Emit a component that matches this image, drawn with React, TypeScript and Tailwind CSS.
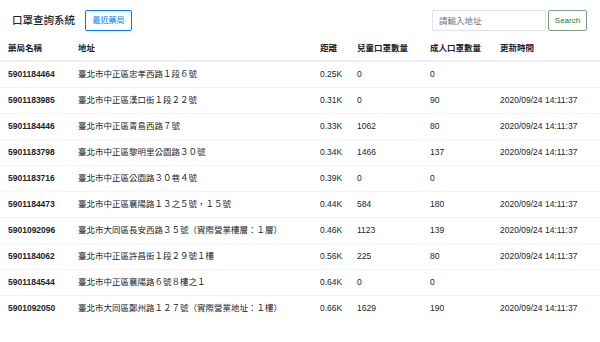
import React from 'react';

const DATE = '2020/09/24 14:11:37';

const rows = [
  { id: '5901184464', addr: '臺北市中正區忠孝西路１段６號', dist: '0.25K', child: '0', adult: '0', time: '' },
  { id: '5901183985', addr: '臺北市中正區漢口街１段２２號', dist: '0.31K', child: '0', adult: '90', time: DATE },
  { id: '5901184446', addr: '臺北市中正區青島西路７號', dist: '0.33K', child: '1062', adult: '80', time: DATE },
  { id: '5901183798', addr: '臺北市中正區黎明里公園路３０號', dist: '0.34K', child: '1466', adult: '137', time: DATE },
  { id: '5901183716', addr: '臺北市中正區公園路３０巷４號', dist: '0.39K', child: '0', adult: '0', time: '' },
  { id: '5901184473', addr: '臺北市中正區襄陽路１３之５號，１５號', dist: '0.44K', child: '584', adult: '180', time: DATE },
  { id: '5901092096', addr: '臺北市大同區長安西路３５號（實際營業樓層：１層）', dist: '0.46K', child: '1123', adult: '139', time: DATE },
  { id: '5901184062', addr: '臺北市中正區許昌街１段２９號１樓', dist: '0.56K', child: '225', adult: '80', time: DATE },
  { id: '5901184544', addr: '臺北市中正區襄陽路６號８樓之１', dist: '0.64K', child: '0', adult: '0', time: '' },
  { id: '5901092050', addr: '臺北市大同區鄭州路１２７號（實際營業地址：１樓）', dist: '0.66K', child: '1629', adult: '190', time: DATE },
];

const headers = ['藥局名稱', '地址', '距離', '兒童口罩數量', '成人口罩數量', '更新時間'];

const App = () => {
  return (
    <div className="w-[600px] h-[342px] overflow-hidden bg-white text-[#212529] font-['Liberation_Sans','Noto_Sans_CJK_TC',sans-serif]">
      <div className="flex items-center pt-[10px] pb-[5px] pl-[12px] pr-[13px]">
        <h1 className="text-[10.5px] leading-none font-medium">口罩查詢系統</h1>
        <button className="ml-[10px] h-[21px] w-[47px] rounded-[2px] border border-[#007bff] text-[#007bff] text-[8px]">
          最近藥局
        </button>
        <div className="ml-auto flex items-center gap-[2px]">
          <input
            className="h-[21px] w-[114px] rounded-[2px] border border-[#dde1e5] px-[6px] text-[8.5px] placeholder:text-[#6c757d] outline-none"
            placeholder="請輸入地址"
          />
          <button className="h-[21px] w-[39px] rounded-[2px] border border-[#7f9c88] text-[#28743f] text-[8px]">
            Search
          </button>
        </div>
      </div>
      <table className="w-full table-fixed border-collapse text-[8.5px] leading-none">
        <colgroup>
          <col className="w-[78px]" />
          <col className="w-[242px]" />
          <col className="w-[37px]" />
          <col className="w-[73px]" />
          <col className="w-[70px]" />
          <col />
        </colgroup>
        <thead>
          <tr className="h-[25px] border-b-2 border-[#eceef0]">
            {headers.map((h, i) => (
              <th key={h} className={`text-left font-semibold ${i === 0 ? 'pl-[8px]' : ''}`}>
                {h}
              </th>
            ))}
          </tr>
        </thead>
        <tbody>
          {rows.map((r, i) => (
            <tr key={r.id} className={`h-[26px] ${i > 0 ? 'border-t border-[#f3f4f6]' : ''}`}>
              <td className="pl-[8px] font-bold">{r.id}</td>
              <td>{r.addr}</td>
              <td>{r.dist}</td>
              <td>{r.child}</td>
              <td>{r.adult}</td>
              <td>{r.time}</td>
            </tr>
          ))}
        </tbody>
      </table>
    </div>
  );
};

export default App;
